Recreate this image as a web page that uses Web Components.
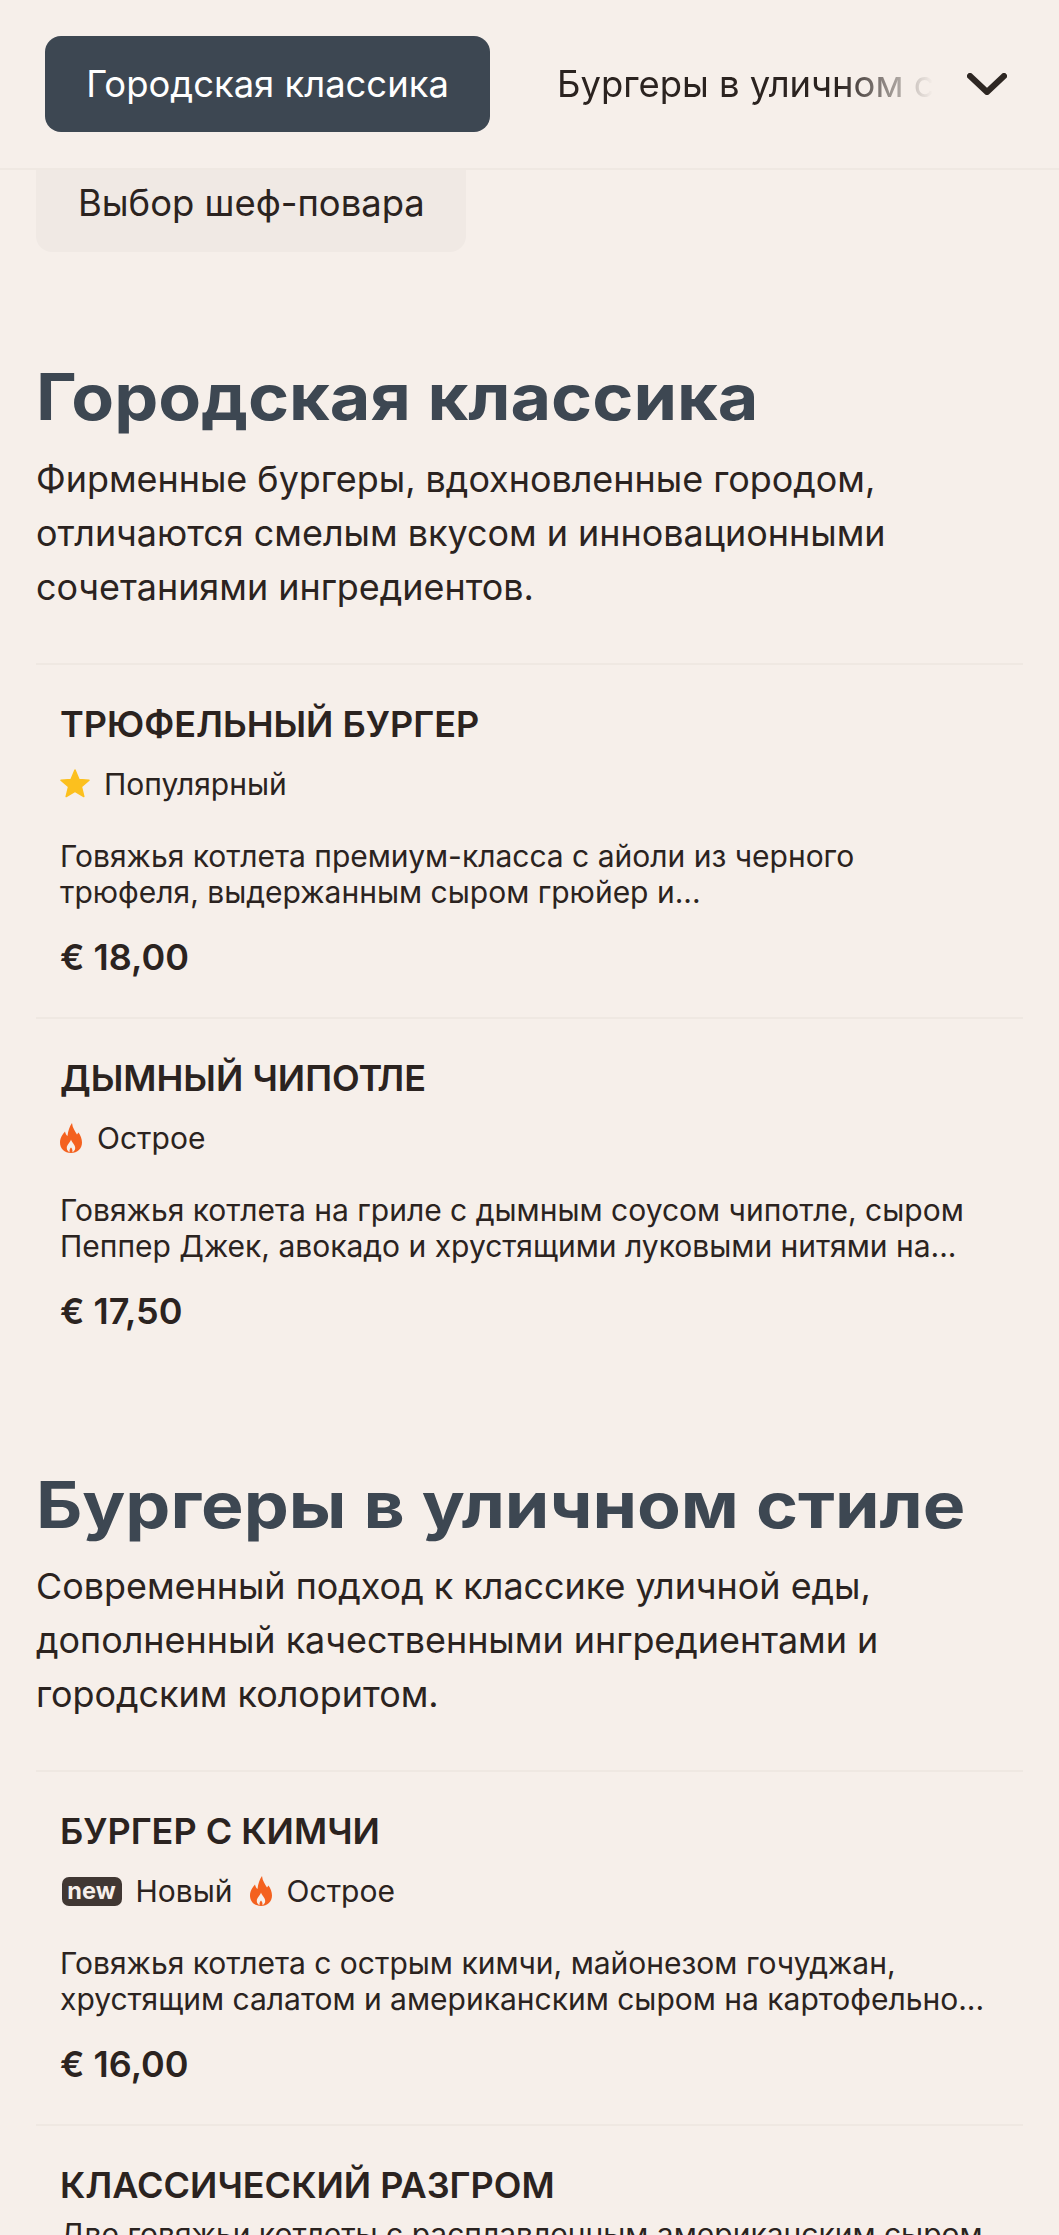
<!DOCTYPE html>
<html lang="ru"><head><meta charset="utf-8"><title>Menu</title>
<style>
html,body{margin:0;padding:0;height:2235px;overflow:hidden;background:#f6efea;}
body{font-family:Inter,"Liberation Sans",sans-serif;color:#2b2320;}
</style></head><body>
<menu-page>
  <tab-bar active="Городская классика" next="Бургеры в уличном стиле" slot="bar"></tab-bar>
  <chef-chip>Выбор шеф-повара</chef-chip>
  <menu-section heading="Городская классика" stretch="1.093" text="Фирменные бургеры, вдохновленные городом, отличаются смелым вкусом и инновационными сочетаниями ингредиентов.">
    <menu-item name="ТРЮФЕЛЬНЫЙ БУРГЕР" price="€ 18,00">
      <item-tag slot="tags" kind="star">Популярный</item-tag>
      Говяжья котлета премиум-класса с айоли из черного трюфеля, выдержанным сыром грюйер и...
    </menu-item>
    <menu-item name="ДЫМНЫЙ ЧИПОТЛЕ" price="€ 17,50">
      <item-tag slot="tags" kind="fire">Острое</item-tag>
      Говяжья котлета на гриле с дымным соусом чипотле, сыром Пеппер Джек, авокадо и хрустящими луковыми нитями на...
    </menu-item>
  </menu-section>
  <menu-section heading="Бургеры в уличном стиле" stretch="1.118" text="Современный подход к классике уличной еды, дополненный качественными ингредиентами и городским колоритом.">
    <menu-item name="БУРГЕР С КИМЧИ" price="€ 16,00">
      <item-tag slot="tags" kind="new">Новый</item-tag>
      <item-tag slot="tags" kind="fire">Острое</item-tag>
      Говяжья котлета с острым кимчи, майонезом гочуджан, хрустящим салатом и американским сыром на картофельно...
    </menu-item>
    <menu-item notags name="КЛАССИЧЕСКИЙ РАЗГРОМ" price="€ 15,00">
      Две говяжьи котлеты с расплавленным американским сыром, маринованными огурцами и фирменным соусом...
    </menu-item>
  </menu-section>
</menu-page>
<script>
function def(name, css, html){
  customElements.define(name, class extends HTMLElement{
    constructor(){super();this.attachShadow({mode:'open'});}
    connectedCallback(){
      const get=k=>this.getAttribute(k)||'';
      this.shadowRoot.innerHTML='<style>'+css+'</style>'+html(get);
    }
  });
}
def('menu-page',`:host{display:block}`,()=>`<slot name="bar"></slot><slot></slot>`);
def('tab-bar',`
 :host{display:flex;align-items:center;height:168px;border-bottom:2px solid #efe8e2;padding-left:45px;background:#f6efea}
 .on{flex:none;box-sizing:border-box;width:445px;height:96px;border-radius:16px;background:#3d4752;color:#fff;display:flex;align-items:center;justify-content:center;font-size:36.4px}
 .next{flex:none;width:376px;margin-left:67px;white-space:nowrap;overflow:hidden;font-size:36.4px;color:#2b2320;
   -webkit-mask-image:linear-gradient(90deg,#000 75%,transparent 100%);mask-image:linear-gradient(90deg,#000 75%,transparent 100%)}
 svg{flex:none;margin-left:34px}
`,g=>`<div class="on">${g('active')}</div><div class="next">${g('next')}</div>
 <svg width="40" height="22" viewBox="0 0 40 22" fill="none" stroke="#2e2723" stroke-width="6" stroke-linecap="round" stroke-linejoin="round"><path d="M3 3 20 19 37 3"/></svg>`);
def('chef-chip',`
 :host{display:block;width:430px;height:82px;box-sizing:border-box;margin:0 0 11.3px 36px;padding-left:42px;background:#f0e9e4;border-radius:0 0 16px 16px;font-size:36.4px;line-height:66px;color:#2b2320}
`,()=>`<slot></slot>`);
def('menu-section',`
 :host{display:block;padding:0 36px}
 h2{margin:0;padding-top:91px;font:700 64px/86px Inter,"Liberation Sans",sans-serif;color:#3d4752;white-space:nowrap;}
 h2 span{display:inline-block;transform-origin:0 50%;}
 p{margin:0;padding-top:11.6px;font-size:35.9px;line-height:54px;color:#2b2320;width:900px}
 .list{margin-top:49px}
`,g=>`<h2><span style="transform:scaleX(${g('stretch')})">${g('heading')}</span></h2><p>${g('text')}</p><div class="list"><slot></slot></div>`);
def('menu-item',`
 :host{display:block;box-sizing:border-box;border-top:2px solid #efe8e2;padding:0 24px;height:354px}
 h3{margin:0;padding-top:37px;font:600 36px/44px Inter,"Liberation Sans",sans-serif;color:#2b2320;white-space:nowrap}
 .tags{display:flex;align-items:center;gap:17px;height:42px;margin-top:17px}
 .desc{margin-top:33px;font-size:30px;line-height:36px;color:#2b2320}
 :host([notags]) .tags{display:none}
 :host([notags]) .desc{margin-top:9px}
 .price{margin-top:25px;font:600 36px/44px Inter,"Liberation Sans",sans-serif;color:#2b2320}
`,g=>`<h3>${g('name')}</h3><div class="tags"><slot name="tags"></slot></div><div class="desc"><slot></slot></div><div class="price">${g('price')}</div>`);
const icons={
 star:`<svg width="30" height="29" viewBox="0 0 30 29"><path fill="#fcc01e" stroke="#fcc01e" stroke-width="1.5" stroke-linejoin="round" d="M15 1 19 10.5 29 11.3 21.4 17.8 23.8 27.5 15 22.3 6.2 27.5 8.6 17.8 1 11.3 11 10.5Z"/></svg>`,
 fire:`<svg width="22" height="30" viewBox="0 0 22 30"><path fill="#f4611f" fill-rule="evenodd" d="M12 0C12.5 5 15 8 17 11.5L18.5 9.5C20.5 12.5 22 16 22 19.5C22 25.5 17.5 30 11 30C4.5 30 0 25.5 0 19.5C0 14.5 3 11 5 8.5C5.5 10.5 6.3 12 7.5 13C8 8 9.5 3.5 12 0ZM11 16.5C10 20 6.8 21.5 6.8 25C6.8 27 8 28.6 9.6 29.2C9.2 27 10 25.5 11 24.5C12 25.5 12.8 27 12.4 29.2C14 28.6 15.2 27 15.2 25C15.2 21.5 12 20 11 16.5Z"/></svg>`,
 new:`<span class="nw">new</span>`
};
def('item-tag',`
 :host{display:inline-flex;align-items:center;gap:14px;font-size:30px;line-height:42px;color:#2b2320}
 :host([kind=fire]){gap:15px}
 .nw{display:inline-block;box-sizing:border-box;width:60px;height:29px;margin-left:1.5px;border-radius:7px;background:#403733;color:#f6efea;font:700 23.5px/27px Inter,"Liberation Sans",sans-serif;text-align:center}
 svg{display:block}
`,g=>`${icons[g('kind')]}<span><slot></slot></span>`);
</script>
</body></html>
